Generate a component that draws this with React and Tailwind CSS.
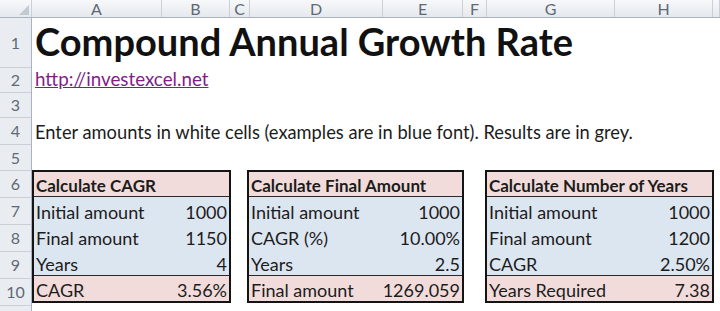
import React from "react";

// column widths: row header, A..H, remainder
const cols = [
  { name: "", w: "w-[32px]" },
  { name: "A", w: "w-[130px]" },
  { name: "B", w: "w-[68px]" },
  { name: "C", w: "w-[20px]" },
  { name: "D", w: "w-[133px]" },
  { name: "E", w: "w-[80px]" },
  { name: "F", w: "w-[24px]" },
  { name: "G", w: "w-[128px]" },
  { name: "H", w: "w-[98px]" },
  { name: "", w: "flex-1" },
];

const rowHeights = [
  "h-[50px]",
  "h-[25px]",
  "h-[25px]",
  "h-[27px]",
  "h-[26px]",
  "h-[27px]",
  "h-[27px]",
  "h-[27px]",
  "h-[27px]",
  "h-[27px]",
];

const boxes = [
  {
    title: "Calculate CAGR",
    w: "w-[199px]",
    rows: [
      ["Initial amount", "1000"],
      ["Final amount", "1150"],
      ["Years", "4"],
    ],
    result: ["CAGR", "3.56%"],
  },
  {
    title: "Calculate Final Amount",
    w: "w-[217px]",
    rows: [
      ["Initial amount", "1000"],
      ["CAGR (%)", "10.00%"],
      ["Years", "2.5"],
    ],
    result: ["Final amount", "1269.059"],
  },
  {
    title: "Calculate Number of Years",
    w: "w-[229px]",
    rows: [
      ["Initial amount", "1000"],
      ["Final amount", "1200"],
      ["CAGR", "2.50%"],
    ],
    result: ["Years Required", "7.38"],
  },
];

function CalcBox({ box }) {
  return (
    <div className={`${box.w} border-2 border-[#141414] flex flex-col text-[#1c1c1c]`}>
      {/* header */}
      <div className="h-[25px] bg-[#f2dcdb] border-b border-[#2a2a2a] flex items-end px-[2px] pb-[2px] font-bold text-[17px]">
        {box.title}
      </div>
      {/* inputs */}
      {box.rows.map(([label, val]) => (
        <div key={label} className="h-[26px] bg-[#dce6f1] flex items-end justify-between px-[2px] pb-[2px]">
          <span>{label}</span>
          <span>{val}</span>
        </div>
      ))}
      {/* result */}
      <div className="h-[26px] bg-[#f2dcdb] border-t border-[#2a2a2a] flex items-end justify-between px-[2px] pb-[2px]">
        <span>{box.result[0]}</span>
        <span>{box.result[1]}</span>
      </div>
    </div>
  );
}

export default function App() {
  return (
    <div className="w-[720px] h-[311px] overflow-hidden bg-white text-black font-['Lato',sans-serif] text-[18px] leading-none">
      {/* column headers */}
      <div className="flex h-[18px] bg-gradient-to-b from-[#f7f8fa] to-[#e5e9ee] border-b border-[#aab4c0] text-[#5f6975] text-[16px]">
        {cols.map((c, i) => (
          <div
            key={i}
            className={`${c.w} shrink-0 flex items-center justify-center border-r border-[#c9d0d8] relative`}
          >
            {i === 0 && (
              <div className="absolute right-[2px] bottom-[2px] w-0 h-0 border-l-[10px] border-l-transparent border-b-[10px] border-b-[#c3c9d1]" />
            )}
            {c.name}
          </div>
        ))}
      </div>

      <div className="flex">
        {/* row headers */}
        <div className="w-[32px] shrink-0 bg-[#e9edf2] border-r border-[#aab4c0] text-[#5f6975] text-[16px]">
          {rowHeights.map((h, i) => (
            <div key={i} className={`${h} flex items-center justify-center border-b border-[#c9d0d8]`}>
              {i + 1}
            </div>
          ))}
          <div className="h-[5px]" />
        </div>

        {/* sheet body */}
        <div className="flex-1 flex flex-col">
          <div className="h-[50px] flex items-end px-[3px] pb-[8px] text-[38px] font-bold text-[#111]">
            Compound Annual Growth Rate
          </div>
          <div className="h-[25px] flex items-end px-[3px] pb-[4px] text-[18.8px]">
            <a href="#" className="text-[#7f1f86] underline">http://investexcel.net</a>
          </div>
          <div className="h-[25px]" />
          <div className="h-[27px] flex items-end px-[3px] pb-[4px] text-[18.3px] text-[#1c1c1c]">
            Enter amounts in white cells (examples are in blue font). Results are in grey.
          </div>
          <div className="h-[26px]" />
          <div className="flex -mt-[1px]">
            <CalcBox box={boxes[0]} />
            <div className="w-[16px] shrink-0" />
            <CalcBox box={boxes[1]} />
            <div className="w-[21px] shrink-0" />
            <CalcBox box={boxes[2]} />
          </div>
        </div>
      </div>
    </div>
  );
}
